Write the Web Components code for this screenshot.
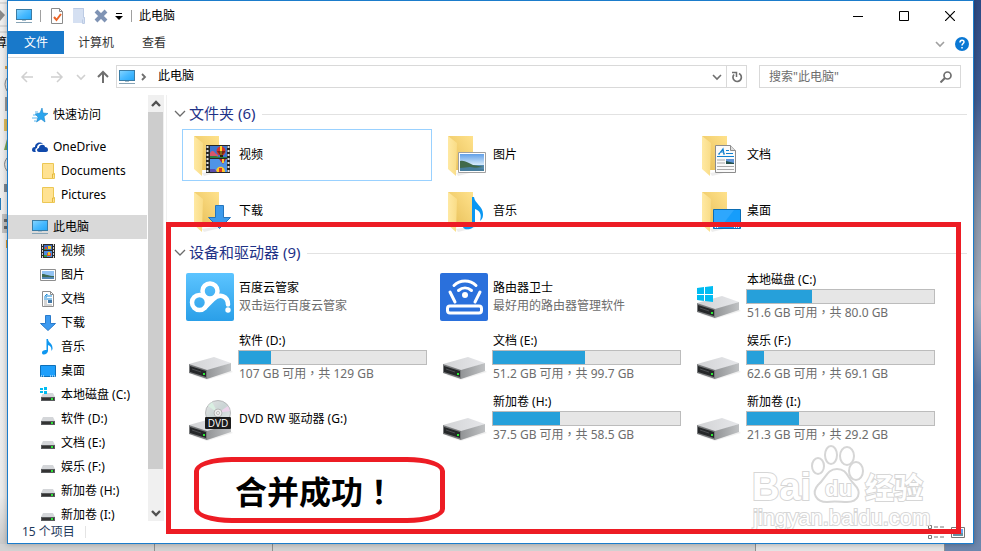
<!DOCTYPE html>
<html lang="zh-CN">
<head>
<meta charset="utf-8">
<title>此电脑</title>
<style>
    html, body { height: 100%; margin: 0; }
    body {
        overflow: hidden;
        font: 12px/18px "Noto Sans", "Noto Sans CJK SC", sans-serif;
        color: #000;
    }
</style>
</head>
<body>
<desk-top>
    <explorer-window>
        <title-bar slot="title" label="此电脑"></title-bar>
        <ribbon-tabs slot="ribbon"></ribbon-tabs>
        <address-bar slot="address" path="此电脑"></address-bar>
        <nav-pane slot="nav">
            <nav-item icon="star">快速访问</nav-item>
            <nav-item icon="onedrive" gap>OneDrive</nav-item>
            <nav-item icon="folder" child>Documents</nav-item>
            <nav-item icon="folder" child>Pictures</nav-item>
            <nav-item icon="pc" gap selected>此电脑</nav-item>
            <nav-item icon="video" child>视频</nav-item>
            <nav-item icon="picture" child>图片</nav-item>
            <nav-item icon="document" child>文档</nav-item>
            <nav-item icon="download" child>下载</nav-item>
            <nav-item icon="music" child>音乐</nav-item>
            <nav-item icon="desktop" child>桌面</nav-item>
            <nav-item icon="sysdrive" child>本地磁盘 (C:)</nav-item>
            <nav-item icon="drive" child>软件 (D:)</nav-item>
            <nav-item icon="drive" child>文档 (E:)</nav-item>
            <nav-item icon="drive" child>娱乐 (F:)</nav-item>
            <nav-item icon="drive" child>新加卷 (H:)</nav-item>
            <nav-item icon="drive" child>新加卷 (I:)</nav-item>
        </nav-pane>
        <item-group label="文件夹 (6)">
            <folder-tile icon="video-l" focused>视频</folder-tile>
            <folder-tile icon="picture-l">图片</folder-tile>
            <folder-tile icon="document-l">文档</folder-tile>
            <folder-tile icon="download-l">下载</folder-tile>
            <folder-tile icon="music-l">音乐</folder-tile>
            <folder-tile icon="desktop-l">桌面</folder-tile>
        </item-group>
        <item-group label="设备和驱动器 (9)">
            <drive-tile icon="cloud-l" info="双击运行百度云管家">百度云管家</drive-tile>
            <drive-tile icon="router-l" info="最好用的路由器管理软件">路由器卫士</drive-tile>
            <drive-tile icon="sysdrive-l" used="35" info="51.6 GB 可用，共 80.0 GB">本地磁盘 (C:)</drive-tile>
            <drive-tile icon="drive-l" used="17" info="107 GB 可用，共 129 GB">软件 (D:)</drive-tile>
            <drive-tile icon="drive-l" used="49" info="51.2 GB 可用，共 99.7 GB">文档 (E:)</drive-tile>
            <drive-tile icon="drive-l" used="9" info="62.6 GB 可用，共 69.1 GB">娱乐 (F:)</drive-tile>
            <drive-tile icon="dvd-l">DVD RW 驱动器 (G:)</drive-tile>
            <drive-tile icon="drive-l" used="36" info="37.5 GB 可用，共 58.5 GB">新加卷 (H:)</drive-tile>
            <drive-tile icon="drive-l" used="28" info="21.3 GB 可用，共 29.2 GB">新加卷 (I:)</drive-tile>
        </item-group>
        <status-bar slot="status">15 个项目</status-bar>
        <water-mark slot="overlay"></water-mark>
        <red-frame slot="overlay" lang="zh-TW">合并成功！</red-frame>
    </explorer-window>
</desk-top>

<script>
const define = (name, html, setup) => {
    const template = document.createElement("template");
    template.innerHTML = html;
    customElements.define(name, class extends HTMLElement {
        constructor() {
            super();
            this.attachShadow({mode: "open"}).appendChild(template.content.cloneNode(true));
        }
        connectedCallback() {
            if (setup) setup(this, this.shadowRoot);
        }
    });
};

// every icon has its own shadow root, so gradient ids can repeat
const folderBack = `
    <defs>
        <linearGradient id="fb" x1="0" x2="1" y1="1" y2="0"><stop offset="0" stop-color="#e6bd55"/><stop offset="1" stop-color="#ffe28c"/></linearGradient>
        <linearGradient id="ff" x1="0" x2="1"><stop offset="0" stop-color="#ffe9a3"/><stop offset="1" stop-color="#f9dc86"/></linearGradient>
    </defs>
    <path d="M16 42l6-1 14-2-2 2-16 4z" fill="#000" opacity=".07"/>
    <path d="M8 5h25v34H16z" fill="url(#fb)"/>
    <path d="M8 5l9 7-1 33-8-7z" fill="url(#ff)"/>`;

const driveBody = `
    <defs>
        <linearGradient id="dt" x1="0" x2="1"><stop offset="0" stop-color="#d2d3d5"/><stop offset="1" stop-color="#e6e7ea"/></linearGradient>
        <linearGradient id="ds" x1="0" x2="1"><stop offset="0" stop-color="#929496"/><stop offset="1" stop-color="#c0c2c4"/></linearGradient>
    </defs>
    <path d="M6 41l15 5 26-8-4-3z" fill="#000" opacity=".06"/>
    <path d="M3 30l25-7 17 6-24 8z" fill="url(#dt)"/>
    <path d="M21 36l24-7v8l-24 8z" fill="url(#ds)"/>
    <path d="M3 30l18 6v9L3 39z" fill="#77797b"/>
    <path d="M4 32l16 5v6L4 38z" fill="#252729"/>
    <path d="M6 35l9 3" stroke="#4b4d50" fill="none"/>
    <path d="M17 39h2v2h-2z" fill="#2bea35"/>`;

const winLogo = `<path d="M3 15l7-1v7H3zM11 14l8-1v8h-8zM3 22h7v6l-7-1zM11 22h8v7l-8-1z" fill="#00bcf2"/>`;

const smallDrive = `
    <path d="M3 6h10l2 4H1z" fill="#d4d6d9"/><path d="M1 10h14v4H1z" fill="#5a5c5e"/>
    <path d="M2 11h12v2H2z" fill="#333"/><path d="M11 11h2v2h-2z" fill="#2be436"/>`;

const ICONS = {
    pc: [16, `<defs><linearGradient id="g" x1="0" x2="1" y1="0" y2="1"><stop offset="0" stop-color="#86d5ff"/><stop offset=".5" stop-color="#49baff"/><stop offset="1" stop-color="#23a6f8"/></linearGradient></defs>
        <rect x=".5" y="1.5" width="15" height="10" fill="url(#g)" stroke="#3a7ca5"/>
        <path d="M6 12h4v1H6z" fill="#a9bfcd"/><path d="M0 14h16v1H0z" fill="#86a3b5"/>`],
    properties: [16, `<path d="M2.500.500h8l3 3v12h-11z" fill="#fff" stroke="#8b8b8b"/><path d="M10.500.500v3h3" fill="none" stroke="#8b8b8b"/>
        <path d="M5 9l2.500 3L12 6" fill="none" stroke="#eb6426" stroke-width="2"/>`],
    newfolder: [16, `<path d="M2 0h11v9h1v6H2z" fill="#d5e0f2"/><path d="M2.500.500h10v9h1v6h-2v-4" fill="none" stroke="#bccbe4"/>`],
    remove: [16, `<path d="M3 3l10 10M13 3L3 13" stroke="#7f93b4" stroke-width="4"/>`],
    menu: [8, `<path d="M1 1h6v1H1z"/><path d="M0 4h8L4 8z"/>`],
    min: [10, `<path d="M0 5h10v1H0z"/>`],
    max: [10, `<path d="M.5.5h9v9h-9z" fill="none" stroke="#000"/>`],
    close: [10, `<path d="M0 0l10 10M10 0L0 10" stroke="#000" stroke-width="1.200"/>`],
    down: [10, `<path d="M1 3l4 4 4-4" fill="none" stroke="currentColor" stroke-width="1.600"/>`],
    scrollup: [10, `<path d="M1 7l4-4 4 4" fill="none" stroke="currentColor" stroke-width="2.400"/>`],
    scrolldown: [10, `<path d="M1 3l4 4 4-4" fill="none" stroke="currentColor" stroke-width="2.400"/>`],
    right: [10, `<path d="M3 2l3 3-3 3" fill="none" stroke="currentColor" stroke-width="1.800"/>`],
    expand: [12, `<path d="M1 3l5 5 5-5" fill="none" stroke="currentColor" stroke-width="1.300"/>`],
    help: [14, `<circle cx="7" cy="7" r="7" fill="#0a78d4"/><path d="M5 5.500c0-3 4-3 4-.5 0 1.500-2 1.500-2 3.500M7 10v1.500" fill="none" stroke="#fff" stroke-width="1.500"/>`],
    back: [14, `<path d="M13 7H2M7 2L2 7l5 5" fill="none" stroke="currentColor" stroke-width="1.500"/>`],
    forward: [14, `<path d="M1 7h11M7 2l5 5-5 5" fill="none" stroke="currentColor" stroke-width="1.500"/>`],
    upward: [14, `<path d="M7 13V2M2 7l5-5 5 5" fill="none" stroke="currentColor" stroke-width="2"/>`],
    refresh: [12, `<path d="M8 2.500A4.200 4.200 0 1 1 3 3.500" fill="none" stroke="#6f6f6f" stroke-width="1.700"/><path d="M1 1.500h4.500V6" fill="none" stroke="#6f6f6f" stroke-width="1.500"/>`],
    search: [12, `<circle cx="7.500" cy="4.500" r="3.500" fill="none" stroke="#6f6f6f" stroke-width="1.700"/><path d="M5 7l-4.500 4.500" stroke="#6f6f6f" stroke-width="2"/>`],
    star: [16, `<path d="M10 1l1 5 5 .500-4 3 1 5.500-4-3-4.500 3L6 10 3 7l5-1z" fill="#2aa5ee" stroke="#1784cc" stroke-width=".600"/><path d="M3 5h3M1 8h3M0 11h5M2 14h2" stroke="#58b6ef"/>`],
    onedrive: [16, `<path d="M0 11c0-2 1-3 3-3 0-4 5-6 8-3-4-1-6 1-6 4-2 0-2 3-1 4H2c-1 0-2-1-2-2z" fill="#1049ab"/>
        <path d="M5 11c0-1 1-2 2-2 0-4 6-4 6-1 2 0 3 1 3 3 0 1-1 2-2 2H7c-1 0-2-1-2-2z" fill="#1049ab"/>`],
    folder: [16, `<path d="M2.500.500h11v10h1v5h-12z" fill="#ffe292" stroke="#ecc754"/><path d="M12.500 15v-4h2" fill="none" stroke="#e3b93e"/>`],
    video: [16, `<path d="M1 1h14v14H1z" fill="#2b2b2b"/><path d="M4 2h8v5H4z" fill="#3c6bc2"/><path d="M4 8h8v6H4z" fill="#4c8de0"/>
        <path d="M2.500 1v14M13.500 1v14" stroke="#d5d5d5" stroke-dasharray="2 1"/><path d="M5 4h2v3H5zM7 10h4v3H7z" fill="#e24b2a"/><path d="M8 3h3v3H8zM8 9h2v3H8z" fill="#f3c320"/><path d="M4 6h3v1H4zM4 12h3v2H4z" fill="#3a9a42"/>`],
    picture: [16, `<path d="M.500 2.500h15v11H.500z" fill="#fff" stroke="#8e8e8e"/><path d="M2 4h12v5H2z" fill="#92c3f3"/><path d="M2 7c4 0 6 2 12 2v1H2z" fill="#3d6a52"/><path d="M2 10h12v2H2z" fill="#5288b4"/>`],
    document: [16, `<path d="M2.500.500h8l3 3v12h-11z" fill="#fff" stroke="#8e8e8e"/><path d="M10.500.500v3h3" fill="none" stroke="#8e8e8e"/><path d="M4 6h3M8 5h4M4 8h8" stroke="#1d8ad6"/><path d="M5 5l2-2v3" fill="none" stroke="#1d8ad6"/><path d="M4 10h3M4 12h3M4 14h8" stroke="#aaa"/><path d="M8 9h4v3H8z" fill="#4278a8"/>`],
    download: [16, `<path d="M5.500.500h5v8h5L8 15.500.500 8.500h5z" fill="#3d9af0" stroke="#2a7bcb"/>`],
    music: [16, `<path d="M6.500 0h1.500c0 4 5 4 4.500 10l-1 2c0-4-1-5-3.500-6v6c0 3-5.500 5-6 2 0-3 3-3 4.500-3z" fill="#0f97f0"/>`],
    desktop: [16, `<path d="M.500 2.500h15v11H.500z" fill="#1e9ffb" stroke="#0e70b8"/><path d="M1 13h3M10 13h5" stroke="#fff" stroke-dasharray="1 1"/>`],
    drive: [16, smallDrive],
    sysdrive: [16, smallDrive + `<path d="M0 0h7v7H0z" fill="#fff"/><path d="M0 1h3v2H0zM4 0h3v3H4zM0 4h3v2H0zM4 4h3v3H4z" fill="#00bcf2"/>`],
    details: [16, `<path d="M.500 1.500h3v3h-3zM.500 6.500h3v3h-3zM.500 11.500h3v3h-3z" fill="none" stroke="#777"/><path d="M6 3h4M12 3h4M6 8h4M12 8h4M6 13h4M12 13h4" stroke="#777"/>`],
    tiles: [14, `<path d="M.500 2.500h13v10H.500z" fill="#fff" stroke="#777"/><path d="M2 4h10v4H2z" fill="#69a6f1"/><path d="M2 8h10v3H2z" fill="#6492a2"/>`],

    "video-l": [48, folderBack + `
        <path d="M20 14h24v28H20z" fill="#272727"/><path d="M24 15h17v12H24z" fill="#3d74cf"/><path d="M24 28h17v13H24z" fill="#4f94e6"/>
        <path d="M21.500 15v26M42.500 15v26" stroke="#e2e2e2" stroke-width="2" stroke-dasharray="2 2"/>
        <path d="M24 22c2-3 4-2 5 0l3 2v3h-8z" fill="#d9566a"/><path d="M24 25h6l3 1h8v1H24z" fill="#2c8040"/>
        <ellipse cx="35" cy="20" rx="4.500" ry="4.500" fill="#d93327"/><path d="M34 15h2v9h-2z" fill="#ffd52b"/><path d="M31 20h8v1l-3 3h-2z" fill="#31210b" opacity=".600"/><path d="M34 24h3v2h-3z" fill="#31210b"/>
        <path d="M33 28h7l-3 5z" fill="#ba2235"/><path d="M36 28h2v4h-2z" fill="#f5cb31"/>
        <path d="M30 41c0-7 9-7 9 0z" fill="#ffc928"/><path d="M33 41v-4h3v4z" fill="#d9352b"/><path d="M24 38h5l2 3h-7z" fill="#5a4fae"/>`],
    "picture-l": [48, folderBack + `
        <defs><linearGradient id="sky" x2="0" y2="1"><stop offset="0" stop-color="#62a0e8"/><stop offset="1" stop-color="#d8ecfb"/></linearGradient></defs>
        <path d="M18.500 21.500h27v20h-27z" fill="#fff" stroke="#a0a0a0"/><path d="M20 23h24v11H20z" fill="url(#sky)"/>
        <path d="M20 34h24v6H20z" fill="#578db3"/><path d="M20 30c5-1 8 2 13 4l11 2-10 1H20z" fill="#40694a"/><path d="M20 37l10-1 14 2v2H20z" fill="#467d9c"/>`],
    "document-l": [48, folderBack + `
        <path d="M21.500 14.500h15l5 5v22h-20z" fill="#fafafa" stroke="#8c8c8c"/><path d="M36.500 14.500v5h5" fill="#ddd" stroke="#8c8c8c"/>
        <path d="M25 23l4-5 1 5M26 21h4M24 23h2M29 23h2" fill="none" stroke="#1180cf" stroke-width="1.200"/><path d="M32 19.500h3M32 22.500h7M23 25.500h17" stroke="#1180cf"/>
        <path d="M23 29h8M23 32h8M23 35.500h17M23 38.500h17" stroke="#aaa"/><path d="M32 28h8v5h-8z" fill="#5e94d8"/><path d="M32 30l8 2v1h-8z" fill="#24504a"/>`],
    "download-l": [48, folderBack + `<path d="M29.500 18.500h8v12h7L33.500 41.500 22.500 30.500h7z" fill="#3d9bec" stroke="#2576bd"/>`],
    "music-l": [48, folderBack + `<path d="M32 10h2c1 7 9 9 9 17 0 4-1 5-3 7 2-7 0-10-5-12v14c0 7-11 8-12 4 0-4 5-6 9-4z" fill="#0a97f2"/>`],
    "desktop-l": [48, folderBack + `<path d="M19.500 22.500h27v19h-27z" fill="#169dfb" stroke="#0b6db4"/><path d="M20 23h20L26 41h-6z" fill="#45b2ff" opacity=".500"/><path d="M21 40.500h3M40 40.500h6" stroke="#fff" stroke-dasharray="1 1"/>`],
    "drive-l": [48, driveBody],
    "sysdrive-l": [48, driveBody + winLogo],
    "dvd-l": [48, driveBody + `
        <defs><linearGradient id="disc" x2="1" y2="1"><stop offset="0" stop-color="#e4e4e4"/><stop offset=".500" stop-color="#c9d4d4"/><stop offset="1" stop-color="#ededed"/></linearGradient></defs>
        <circle cx="32" cy="18" r="12.500" fill="url(#disc)" stroke="#b6b8ba"/><path d="M32 18L22 11l4-4z" fill="#d9efe2"/><path d="M32 18l10-7 2 5z" fill="#ecd3ea"/>
        <circle cx="32" cy="18" r="4" fill="#eee" stroke="#b5b5b5"/><circle cx="32" cy="18" r="1.500" fill="#fff" stroke="#bbb"/>
        <rect x="19" y="22" width="26" height="12" rx="1" fill="#1c1c1c"/>
        <text x="32" y="32" text-anchor="middle" font-family="Open Sans, sans-serif" font-size="10" fill="#fff">DVD</text>`],
    "cloud-l": [48, `<defs><linearGradient id="c" x2="0" y2="1"><stop offset="0" stop-color="#5cc4ff"/><stop offset="1" stop-color="#2a9fe8"/></linearGradient></defs>
        <rect width="48" height="48" rx="2" fill="url(#c)"/>
        <g fill="none" stroke="#fff" stroke-width="4.500"><circle cx="13.500" cy="29.500" r="7.500"/><circle cx="24" cy="18" r="7.500"/>
        <path d="M19 34.500l8-8c7-7 15-3 15 5" stroke-linecap="round"/></g><circle cx="42" cy="37" r="2.700" fill="#fff"/>`],
    "router-l": [48, `<rect width="48" height="48" rx="2" fill="#2a70dc"/>
        <g fill="none" stroke="#fff" stroke-width="3" stroke-linecap="round"><rect x="7.500" y="33" width="34" height="7" rx="2.500"/>
        <path d="M10 19l5 10M40 19l-5 10M14 12.500c6-6 16-6 22 0M18.500 17.500c4-3.500 9-3.500 13 0"/></g><circle cx="25" cy="22" r="3" fill="#fff"/>`],
};

define("sys-icon", `
    <style>
        :host { display: block; flex: none; line-height: 0; }
    </style>
`, (host, root) => {
    const [size, art] = ICONS[host.getAttribute("name")];
    root.innerHTML += `<svg width="${size}" height="${size}" viewBox="0 0 ${size} ${size}" aria-hidden="true">${art}</svg>`;
});

define("desk-top", `
    <style>
        :host {
            display: flex;
            box-sizing: border-box;
            height: 100vh;
            padding: 0 7px 7px;
            position: relative;
            overflow: hidden;
            background: linear-gradient(#2c4a85, #3e5c93 18%, #6b7fa3 30%, #8c98ac 40%, #aab2bf 55%, #5c7ba8 70%, #6d87ad);
        }
        .behind {
            position: absolute;
            inset: 0 36px 0 0;
            background: linear-gradient(#f0f0f0, #ececec 90%, #c9c9c9 99%);
            overflow: hidden;
        }
        .behind svg { position: absolute; left: 0; top: 0; }
        .char { position: absolute; left: -5px; top: 34px; }
        .bottom {
            position: absolute;
            inset: auto 0 0 0;
            height: 7px;
            display: flex;
            background: #d2d2d2;
        }
        .bottom i { border-right: 1px solid #8f8f8f; }
        .bottom i:nth-child(1) { flex: 155; }
        .bottom i:nth-child(2) { flex: 117; }
        .bottom i:nth-child(3) { flex: 484; }
        .bottom i:nth-child(4) { flex: 189; background: #e4e4e4; }
        ::slotted(*) { flex: 1; min-width: 0; }
    </style>
    <div class="behind">
        <svg width="7" height="260" viewBox="0 0 7 260">
            <path d="M0 3h7M0 26h7M0 32h7" stroke="#c4c4c4"/><path d="M0 10l5 5-5 6z" fill="#8a8a8a"/>
            <path d="M7 66v3H5v-3z" fill="#d9a34a"/><path d="M7 78q-4 6 0 13" fill="none" stroke="#888"/>
            <path d="M5 97h2v14H5z" fill="#999"/><path d="M4 119h3v12H4z" fill="#e0bd5c"/><path d="M7 139l-3 11h3z" fill="#79a658"/>
            <path d="M7 158q-5 6 0 13" fill="none" stroke="#888"/><path d="M4 184h3v8H4z" fill="#7d8791"/><path d="M0 198h1v12H0z" fill="#277bb8"/>
            <path d="M2 214h5v19H2z" fill="#c2c2c2"/><path d="M4 219h3v3H4zM4 226h3v3H4z" fill="#666"/><path d="M6 240h1v8H6z" fill="#df9c2f"/>
        </svg>
        <span class="char">算</span>
        <div class="bottom"><i></i><i></i><i></i><i></i></div>
    </div>
    <slot></slot>
`);

define("explorer-window", `
    <style>
        :host {
            display: flex;
            flex-direction: column;
            position: relative;
            box-sizing: border-box;
            border: 1px solid #1b7ccb;
            background: #fff;
            box-shadow: 0 0 6px rgba(0, 0, 0, .3);
        }
        .body { flex: 1; display: flex; min-height: 0; }
        main {
            flex: 1;
            min-width: 0;
            margin-left: 2px;
            padding-top: 8px;
            border-left: 1px solid #f0f0f0;
            overflow: hidden;
        }
    </style>
    <slot name="title"></slot>
    <slot name="ribbon"></slot>
    <slot name="address"></slot>
    <div class="body">
        <slot name="nav"></slot>
        <main><slot></slot></main>
    </div>
    <slot name="status"></slot>
    <slot name="overlay"></slot>
`);

define("title-bar", `
    <style>
        :host { display: flex; height: 30px; align-items: center; }
        button { display: flex; align-items: center; justify-content: center; border: 0; padding: 0; background: none; }
        .quick { display: flex; align-items: center; padding: 0 5px 0 8px; gap: 6px; }
        .quick button { width: 16px; height: 16px; }
        .quick .drop { width: 8px; }
        i { width: 1px; height: 12px; margin: 0 2px; background: #a0a0a0; }
        .caption { display: flex; margin-left: auto; }
        .caption button { width: 46px; height: 29px; }
    </style>
    <div class="quick">
        <sys-icon name="pc"></sys-icon>
        <i></i>
        <button aria-label="属性"><sys-icon name="properties"></sys-icon></button>
        <button aria-label="新建文件夹"><sys-icon name="newfolder"></sys-icon></button>
        <button aria-label="删除"><sys-icon name="remove"></sys-icon></button>
        <button class="drop" aria-label="自定义"><sys-icon name="menu"></sys-icon></button>
        <i></i>
    </div>
    <span></span>
    <div class="caption">
        <button aria-label="最小化"><sys-icon name="min"></sys-icon></button>
        <button aria-label="最大化"><sys-icon name="max"></sys-icon></button>
        <button aria-label="关闭"><sys-icon name="close"></sys-icon></button>
    </div>
`, (host, root) => {
    root.querySelector("span").textContent = host.getAttribute("label");
});

define("ribbon-tabs", `
    <style>
        :host { display: flex; height: 26px; align-items: flex-start; border-bottom: 1px solid #dadbdc; }
        button { border: 0; background: none; font: inherit; color: #333; height: 23px; padding: 0 14px; }
        .file { background: #1979ca; color: #fff; padding: 0 16px; }
        .right { display: flex; align-items: center; height: 26px; margin-left: auto; gap: 10px; padding-right: 4px; color: #a0a0a0; }
        .right button { padding: 0; color: inherit; height: auto; }
    </style>
    <button class="file">文件</button>
    <button>计算机</button>
    <button>查看</button>
    <div class="right">
        <button aria-label="展开功能区"><sys-icon name="down"></sys-icon></button>
        <button aria-label="帮助"><sys-icon name="help"></sys-icon></button>
    </div>
`);

define("address-bar", `
    <style>
        :host { display: flex; height: 37px; align-items: center; padding: 0 12px; }
        button { display: flex; align-items: center; justify-content: center; border: 0; padding: 0; background: none; color: #6f6f6f; }
        .history { display: flex; align-items: center; gap: 16px; padding-right: 6px; }
        .history button:disabled { color: #d0d0d0; }
        .history .recent { width: 10px; margin: 0 -6px 0 -4px; }
        .path, .search { display: flex; box-sizing: border-box; height: 23px; align-items: center; border: 1px solid #d9d9d9; }
        .path { flex: 1; padding-left: 2px; gap: 4px; }
        .path button { width: 19px; height: 21px; }
        .path .list { margin-left: auto; margin-right: -4px; }
        .path .refresh { border-left: 1px solid #d9d9d9; width: 20px; }
        .crumb { padding: 0 0 2px 5px; }
        .search { width: 202px; margin-left: 12px; padding: 0 8px 0 9px; }
        input { flex: 1; min-width: 0; border: 0; padding: 0; font: inherit; background: none; outline: 0; }
        input::placeholder { color: #6d6d6d; }
        .mid { color: #6f6f6f; }
    </style>
    <div class="history">
        <button disabled aria-label="后退"><sys-icon name="back"></sys-icon></button>
        <button disabled aria-label="前进"><sys-icon name="forward"></sys-icon></button>
        <button class="recent" disabled aria-label="最近"><sys-icon name="down"></sys-icon></button>
        <button aria-label="向上"><sys-icon name="upward"></sys-icon></button>
    </div>
    <div class="path">
        <sys-icon name="pc"></sys-icon>
        <sys-icon class="mid" name="right"></sys-icon>
        <span class="crumb"></span>
        <button class="list" aria-label="以前的位置"><sys-icon name="down"></sys-icon></button>
        <button class="refresh" aria-label="刷新"><sys-icon name="refresh"></sys-icon></button>
    </div>
    <div class="search">
        <input type="text" aria-label="搜索" placeholder='搜索"此电脑"'>
        <button aria-label="搜索"><sys-icon name="search"></sys-icon></button>
    </div>
`, (host, root) => {
    root.querySelector(".crumb").textContent = host.getAttribute("path");
});

define("nav-pane", `
    <style>
        :host { display: flex; width: 156px; overflow: hidden; }
        nav { flex: 1; min-width: 0; padding-top: 8px; overflow: hidden; }
        .bar { display: flex; flex-direction: column; width: 16px; margin-left: 1px; background: #f0f0f0; color: #505050; }
        button { display: flex; align-items: center; justify-content: center; height: 17px; border: 0; padding: 0; background: none; color: inherit; }
        .thumb { flex: 357; background: #cdcdcd; margin-right: 1px; }
        .rest { flex: 35; }
    </style>
    <nav><slot></slot></nav>
    <div class="bar">
        <button aria-label="向上滚动"><sys-icon name="scrollup"></sys-icon></button>
        <div class="thumb"></div>
        <div class="rest"></div>
        <button aria-label="向下滚动"><sys-icon name="scrolldown"></sys-icon></button>
    </div>
`);

define("nav-item", `
    <style>
        :host { display: block; }
        :host([gap]) { margin-top: 8px; }
        a { display: flex; align-items: center; height: 24px; padding-left: 24px; gap: 5px; color: inherit; text-decoration: none; white-space: nowrap; }
        :host([child]) a { padding-left: 32px; }
        :host([selected]) a { background: #d9d9d9; }
    </style>
    <a href="#"><span class="icon"></span><slot></slot></a>
`, (host, root) => {
    root.querySelector(".icon").innerHTML = `<sys-icon name="${host.getAttribute("icon")}"></sys-icon>`;
});

define("item-group", `
    <style>
        :host { display: block; padding-bottom: 5px; }
        header { display: flex; align-items: center; height: 22px; padding: 0 6px 0 7px; color: #6b6b6b; }
        h2 { margin: 0 7px 2px 3px; font-size: 15px; line-height: 20px; font-weight: normal; color: #1e3287; }
        hr { flex: 1; margin: 0; border: 0; border-top: 1px solid #e2e2e2; }
        .grid { display: grid; grid-template-columns: repeat(auto-fill, 250px); gap: 4px; padding: 4px 0 0 15px; }
    </style>
    <header><sys-icon name="expand"></sys-icon><h2></h2><hr></header>
    <div class="grid"><slot></slot></div>
`, (host, root) => {
    root.querySelector("h2").textContent = host.getAttribute("label");
});

define("folder-tile", `
    <style>
        :host { display: block; }
        a {
            display: flex;
            align-items: center;
            box-sizing: border-box;
            height: 52px;
            padding-left: 3px;
            gap: 5px;
            border: 1px solid transparent;
            color: inherit;
            text-decoration: none;
        }
        :host([focused]) a { border-color: #99d1ff; }
    </style>
    <a href="#"><span class="icon"></span><slot></slot></a>
`, (host, root) => {
    root.querySelector(".icon").innerHTML = `<sys-icon name="${host.getAttribute("icon")}"></sys-icon>`;
});

define("drive-tile", `
    <style>
        :host { display: block; }
        a { display: flex; align-items: center; box-sizing: border-box; height: 57px; padding: 0 5px 0 4px; gap: 4px; color: inherit; text-decoration: none; }
        .text { flex: 1; min-width: 0; white-space: nowrap; }
        .name, .info { padding-left: 1px; }
        .info { color: #6d6d6d; font-family: "Noto Sans", "Noto Sans CJK TC", sans-serif; }
        .bar { box-sizing: border-box; height: 15px; border: 1px solid #bcbcbc; background: #e6e6e6; }
        .fill { height: 100%; background: #26a0da; }
    </style>
    <a href="#">
        <span class="icon"></span>
        <div class="text">
            <div class="name"><slot></slot></div>
            <div class="bar" role="meter" aria-valuemin="0" aria-valuemax="100"><div class="fill"></div></div>
            <div class="info" lang="zh-TW"></div>
        </div>
    </a>
`, (host, root) => {
    const used = host.getAttribute("used");
    const info = host.getAttribute("info");
    const bar = root.querySelector(".bar");
    root.querySelector(".icon").innerHTML = `<sys-icon name="${host.getAttribute("icon")}"></sys-icon>`;
    if (used) {
        bar.setAttribute("aria-valuenow", used);
        bar.setAttribute("aria-label", host.textContent);
        bar.firstChild.style.width = used + "%";
    } else {
        bar.remove();
    }
    if (info) root.querySelector(".info").textContent = info;
    else root.querySelector(".info").remove();
});

define("status-bar", `
    <style>
        :host { display: flex; align-items: center; height: 22px; padding: 0 8px 0 14px; color: #1e395b; }
        i { width: 1px; height: 12px; margin-left: 10px; background: #e4e4e4; }
        .views { display: flex; align-items: center; gap: 7px; margin-left: auto; }
        button { display: flex; border: 0; padding: 0; background: none; }
    </style>
    <slot></slot><i></i>
    <div class="views">
        <button aria-label="详细信息"><sys-icon name="details"></sys-icon></button>
        <button aria-label="大图标"><sys-icon name="tiles"></sys-icon></button>
    </div>
`);

// marks drawn over the window
define("red-frame", `
    <style>
        :host {
            position: absolute;
            inset: 221px 12px 9px 158px;
            border: 5px solid #ed1c24;
            pointer-events: none;
        }
        .note {
            position: absolute;
            left: 23px;
            bottom: 6px;
            display: flex;
            box-sizing: border-box;
            width: 251px;
            height: 66px;
            align-items: center;
            padding: 4px 0 0 36px;
            border: 5px solid #ed1c24;
            border-radius: 38px / 14px;
            font: bold 32px/40px "Noto Sans", "Noto Sans CJK TC", sans-serif;
            white-space: nowrap;
        }
    </style>
    <div class="note"><slot></slot></div>
`);

define("water-mark", `
    <style>
        :host { position: absolute; right: 40px; bottom: 8px; line-height: 0; pointer-events: none; }
        svg { overflow: visible; }
        text { font-family: "Liberation Sans", "Noto Sans CJK SC", sans-serif; font-weight: bold; paint-order: stroke; }
        .site { font-weight: normal; }
    </style>
    <svg width="180" height="90" viewBox="0 0 180 90">
        <g fill="#fff" stroke="#d6d6d6" stroke-width="2">
            <ellipse cx="65" cy="21" rx="6" ry="8"/><ellipse cx="78" cy="10" rx="6" ry="9"/>
            <ellipse cx="94" cy="11" rx="7" ry="9"/><ellipse cx="103" cy="26" rx="7" ry="9"/>
            <path d="M84 24c10 0 10 8 17 15 9 9 4 18-7 18-6 0-12-1-20 0-11 0-16-9-9-17 8-7 9-16 19-16z"/>
            <text x="-1" y="55" font-size="38">Bai</text>
            <text x="72" y="51" font-size="22">du</text>
            <text x="112" y="54" font-size="29">经验</text>
            <text class="site" x="0" y="80" font-size="22">jingyan.baidu.com</text>
        </g>
    </svg>
`);
</script>
</body>
</html>
